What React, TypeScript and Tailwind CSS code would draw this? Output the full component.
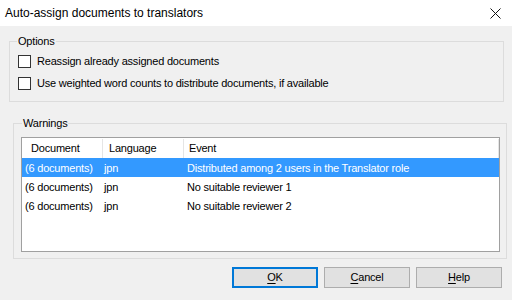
import React from "react";

const rows = [
  { doc: "(6 documents)", lang: "jpn", event: "Distributed among 2 users in the Translator role", selected: true },
  { doc: "(6 documents)", lang: "jpn", event: "No suitable reviewer 1", selected: false },
  { doc: "(6 documents)", lang: "jpn", event: "No suitable reviewer 2", selected: false },
];

function CheckRow({ label }: { label: string }) {
  return (
    <label className="flex h-[22px] items-center">
      <span className="ml-[8px] h-[13px] w-[13px] border border-[#333333] bg-white" />
      <span className="ml-[6px] leading-[15px]">{label}</span>
    </label>
  );
}

function Btn({ hot, rest, primary }: { hot: string; rest: string; primary?: boolean }) {
  return (
    <button
      className={`flex h-[21px] w-[86px] items-center justify-center bg-[#e1e1e1] leading-[15px] ${
        primary ? "border-2 border-[#0078d7]" : "border border-[#adadad]"
      }`}
    >
      <span>
        <span className="underline underline-offset-2">{hot}</span>
        {rest}
      </span>
    </button>
  );
}

export default function App() {
  return (
    <div className="h-[300px] w-[512px] overflow-hidden bg-[#f0f0f0] text-[11px] tracking-[-0.2px] text-black [font-family:'Liberation_Sans',Arial,sans-serif]">
      {/* Title bar */}
      <div className="flex h-[26px] items-center justify-between bg-white pl-[5px] pr-[11px]">
        <span className="text-[12px] leading-[15px] tracking-normal">Auto-assign documents to translators</span>
        <svg width="11" height="11" viewBox="0 0 11 11" className="mt-[1px]">
          <path d="M0.5 0.5 L10.5 10.5 M10.5 0.5 L0.5 10.5" stroke="#111" strokeWidth="1" fill="none" />
        </svg>
      </div>

      {/* Options */}
      <fieldset className="ml-[9px] mt-[8px] h-[68px] w-[495px] border border-[#dcdcdc]">
        <legend className="ml-[7px] px-[1px] leading-[15px]">Options</legend>
        <div className="mt-[1px] flex flex-col">
          <CheckRow label="Reassign already assigned documents" />
          <CheckRow label="Use weighted word counts to distribute documents, if available" />
        </div>
      </fieldset>

      {/* Warnings */}
      <fieldset className="ml-[13px] mt-[14px] h-[143px] w-[494px] border border-[#dcdcdc]">
        <legend className="ml-[8px] px-[1px] leading-[15px]">Warnings</legend>
        <div className="ml-[7px] mt-[6px] h-[115px] w-[479px] border border-[#a0a0a0] bg-white">
          <div className="flex h-[20px] items-center pt-[1px]">
            <div className="flex h-full w-[81px] items-center border-r border-[#e5e5e5] pl-[9px]">Document</div>
            <div className="flex h-full w-[81px] items-center border-r border-[#e5e5e5] pl-[6px]">Language</div>
            <div className="flex h-full flex-1 items-center border-r border-[#e5e5e5] pl-[5px]">Event</div>
          </div>
          {rows.map((r, i) => (
            <div
              key={i}
              className={`flex h-[19px] items-center whitespace-nowrap pt-[2px] ${r.selected ? "bg-[#3399ff] text-white" : ""}`}
            >
              <div className="w-[81px] pl-[3px]">{r.doc}</div>
              <div className="w-[82px] pl-[1px]">{r.lang}</div>
              <div className="pl-[2px]">{r.event}</div>
            </div>
          ))}
        </div>
      </fieldset>

      {/* Buttons */}
      <div className="mr-[10px] mt-[8px] flex justify-end gap-[6px]">
        <Btn hot="O" rest="K" primary />
        <Btn hot="C" rest="ancel" />
        <Btn hot="H" rest="elp" />
      </div>
    </div>
  );
}
